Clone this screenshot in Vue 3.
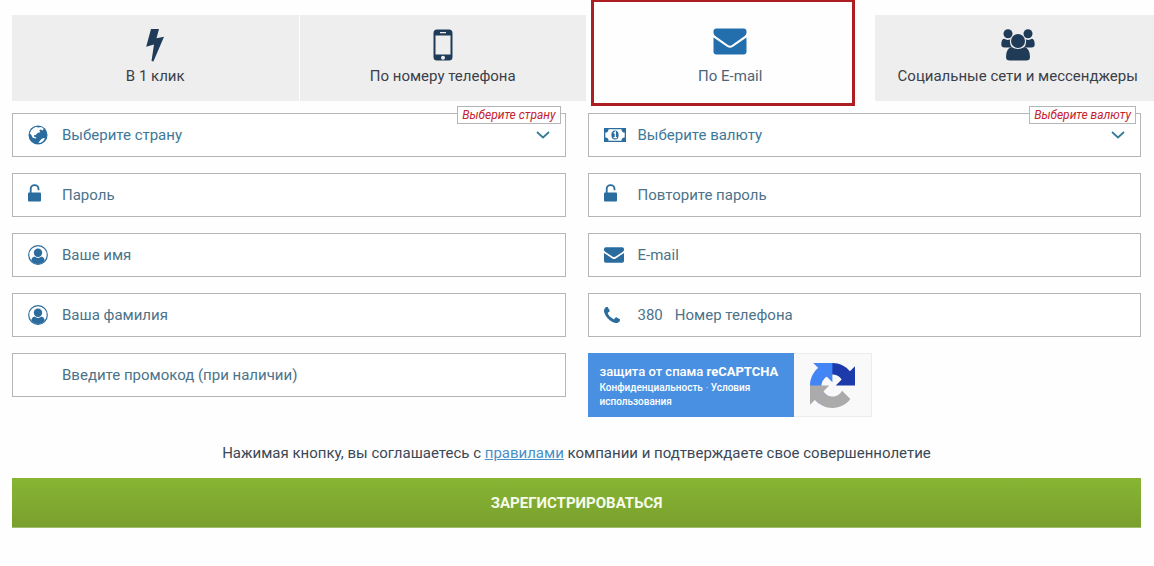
<script setup>
import { ref } from 'vue'

const tabs = [
  { id: 'click', label: 'В 1 клик' },
  { id: 'phone', label: 'По номеру телефона' },
  { id: 'email', label: 'По E-mail' },
  { id: 'social', label: 'Социальные сети и мессенджеры' },
]
const active = ref('email')

const fields = [
  { id: 'country', kind: 'select', icon: 'globe', label: 'Выберите страну' },
  { id: 'currency', kind: 'select', icon: 'money', label: 'Выберите валюту' },
  { id: 'password', type: 'password', icon: 'unlock', label: 'Пароль' },
  { id: 'repeat', type: 'password', icon: 'unlock', label: 'Повторите пароль' },
  { id: 'name', type: 'text', icon: 'user', label: 'Ваше имя' },
  { id: 'mail', type: 'email', icon: 'envelope', label: 'E-mail' },
  { id: 'surname', type: 'text', icon: 'user', label: 'Ваша фамилия' },
  { id: 'tel', type: 'tel', icon: 'handset', label: 'Номер телефона', prefix: '380' },
  { id: 'promo', type: 'text', icon: '', label: 'Введите промокод (при наличии)' },
]
</script>

<template>
  <main class="page">
    <nav class="tabs" aria-label="Способ регистрации">
      <button
        v-for="tab in tabs"
        :key="tab.id"
        type="button"
        class="tab"
        :class="{ active: active === tab.id }"
        @click="active = tab.id"
      >
        <span class="tab-icon">
          <svg v-if="tab.id === 'click'" width="18" height="34" viewBox="0 0 18 34">
            <path d="M5 1h8l-2.500 9.200L18 8.700 7.400 33.500 5.500 33l2.500-16.500-7.800 2.300z" />
          </svg>
          <svg v-else-if="tab.id === 'phone'" width="20" height="32" viewBox="0 0 20 32">
            <path fill-rule="evenodd" d="M4 .5h12A3.500 3.500 0 0 1 19.500 4v24a3.500 3.500 0 0 1-3.500 3.500H4A3.500 3.500 0 0 1 .5 28V4A3.500 3.500 0 0 1 4 .5zM2.500 6.500v19h15v-19zM7 3v1.200h6V3zM10 26.700a2 2 0 1 0 0 4 2 2 0 0 0 0-4z" />
          </svg>
          <svg v-else-if="tab.id === 'email'" width="34" height="27" viewBox="0 0 34 27">
            <path d="M3.500.5h27a3 3 0 0 1 3 3v1.200c0 1.600-1 2.700-2.500 3.900L19 17q-2 1.300-4 0L3 8.600C1.500 7.400.5 6.300.5 4.700V3.500a3 3 0 0 1 3-3z" />
            <path d="M.5 9.500 14 18.700q3 2 6 0L33.500 9.500v14a3 3 0 0 1-3 3h-27a3 3 0 0 1-3-3z" />
          </svg>
          <svg v-else width="34" height="32" viewBox="0 0 34 32">
            <circle cx="7" cy="4.800" r="4.500" />
            <circle cx="27" cy="4.800" r="4.500" />
            <path d="M3 9.800q3.500 2 6.300.400Q8 14.500 11 18.500H3.500Q.3 18.500.3 15.500.3 10.300 3 9.800zM31 9.800q-3.500 2-6.300.400Q26 14.500 23 18.500h7.500q3.200 0 3.200-3 0-5.200-2.700-5.700z" />
            <circle cx="17" cy="12" r="7" />
            <path d="M10.500 18q6.500 4.200 13 0Q29 19.500 29 28q0 3.500-3.800 3.500H8.800Q5 31.500 5 28q0-8.500 5.500-10z" />
          </svg>
        </span>
        <span>{{ tab.label }}</span>
        <span v-if="active === tab.id" class="marker"></span>
      </button>
    </nav>

    <form @submit.prevent>
      <div class="fields">
        <div v-for="f in fields" :key="f.id" class="field">
          <span class="icon">
            <svg v-if="f.icon === 'globe'" width="20" height="20" viewBox="0 0 20 20">
              <circle cx="10" cy="10" r="9.500" />
              <path fill="#fff" d="M3 5.500Q5 2.800 8 1.800l2.500.700 2.700-.5 2.500 1.700-1 1.800-2-1-1.500 1 1.200 1.800-2.500.5-2.500 2.500-1.500-.3.300 1.800 2.300.7-.7 1-3-.8L3 9.500 1.800 8.500zM13.500 14l2-1 1.500.5-2 2.800-2.800 1.800-1.800-.3 1.200-1.500z" />
            </svg>
            <svg v-else-if="f.icon === 'money'" width="22" height="16" viewBox="0 0 22 16">
              <path fill-rule="evenodd" d="M0 1h22v14H0zM4.500 2.300A3 3 0 0 1 1.300 5.500v5a3 3 0 0 1 3.200 3.200h13a3 3 0 0 1 3.200-3.200v-5a3 3 0 0 1-3.200-3.200z" />
              <ellipse cx="11" cy="8" rx="3.600" ry="4.500" />
              <path d="M9.700 6.300 11.300 5v5.500M9.500 10.600h3.400" fill="none" stroke="#fff" stroke-width="1.200" />
            </svg>
            <svg v-else-if="f.icon === 'unlock'" class="lock" width="14" height="18" viewBox="0 0 14 18">
              <rect y="8.500" width="13" height="9" rx="1" />
              <path d="M2.700 9V5a3.900 3.900 0 0 1 7.800 0v1.300" fill="none" stroke="currentColor" stroke-width="1.800" />
            </svg>
            <svg v-else-if="f.icon === 'user'" width="20" height="20" viewBox="0 0 20 20">
              <circle cx="10" cy="10" r="9.300" fill="none" stroke="currentColor" stroke-width="1.200" />
              <circle cx="10" cy="7.800" r="4.200" />
              <path d="M6.500 11.600q3.500 2.600 7 0 2.800.6 3.300 3.600Q14.500 19 10 19t-6.800-3.800q.5-3 3.300-3.600z" />
            </svg>
            <svg v-else-if="f.icon === 'envelope'" width="20" height="16" viewBox="0 0 34 27">
              <path d="M3 .5h28a3 3 0 0 1 3 3v1.200c0 1.600-1 2.700-2.500 3.900L19 16.500q-2 1.300-4 0L2.500 8.600C1 7.400 0 6.300 0 4.700V3.500a3 3 0 0 1 3-3z" />
              <path d="M0 10 14 19.300q3 2 6 0L34 10v13.500a3 3 0 0 1-3 3H3a3 3 0 0 1-3-3z" />
            </svg>
            <svg v-else-if="f.icon === 'handset'" width="16" height="16" viewBox="192 128 1408 1408">
              <path d="M1600 1240q0 27-10 70.500t-21 68.500q-21 50-122 106-94 51-186 51-27 0-53-3.500t-57.500-12.500-47-14.500-55.500-20.500-49-18q-98-35-175-83-127-79-264-216t-216-264q-48-77-83-175-3-9-18-49t-20.500-55.500-14.500-47-12.500-57.500-3.500-53q0-92 51-186 56-101 106-122 25-11 68.500-21t70.500-10q14 0 21 3 18 6 53 76 11 19 30 54t35 63.500 31 53.500q3 4 17.500 25t21.500 35.500 7 28.500q0 20-28.500 50t-62 55-62 53-28.500 46q0 9 5 22.500t8.500 20.500 14 24 11.500 19q76 137 174 235t235 174q2 1 19 11.500t24 14 20.500 8.500 22.500 5q18 0 46-28.500t53-62 55-62 50-28.500q14 0 28.500 7t35.500 21.500 25 17.500q25 15 53.500 31t63.500 35 54 30q70 35 76 53 3 7 3 21z" />
            </svg>
          </span>

          <template v-if="f.kind === 'select'">
            <select :id="f.id" class="control choice">
              <option>{{ f.label }}</option>
            </select>
            <svg class="chevron" width="14" height="8" viewBox="0 0 14 8">
              <path d="m1 1 6 5.500L13 1" fill="none" stroke="currentColor" stroke-width="1.700" />
            </svg>
            <label class="hint" :for="f.id">{{ f.label }}</label>
          </template>
          <template v-else>
            <label v-if="f.prefix" class="prefix" :for="f.id">{{ f.prefix }}</label>
            <input :id="f.id" class="control" :type="f.type" :placeholder="f.label" :aria-label="f.label" />
          </template>
        </div>

        <aside class="captcha">
          <div class="captcha-text">
            <p class="captcha-title">защита от спама <b>reCAPTCHA</b></p>
            <p class="captcha-links"><a href="#">Конфиденциальность</a> <i>·</i> <a href="#">Условия<br />использования</a></p>
          </div>
          <div class="captcha-logo">
            <svg width="45" height="45" viewBox="0 0 64 64">
              <path fill="#1c3aa9" d="M64 31.955l-.033-1.370V4.687l-7.160 7.160C50.948 4.674 42.033.093 32.050.093c-10.400 0-19.622 4.960-25.458 12.640l11.736 11.860a15.550 15.550 0 0 1 4.754-5.334c2.050-1.600 4.952-2.906 8.968-2.906.485 0 .86.057 1.135.163 4.976.393 9.288 3.140 11.828 7.124l-8.307 8.307L64 31.953" />
              <path fill="#4285f4" d="M31.862.094l-1.370.033H4.594l7.160 7.160C4.580 13.147 0 22.060 0 32.046c0 10.400 4.960 19.622 12.640 25.458L24.500 45.768a15.550 15.550 0 0 1-5.334-4.754c-1.600-2.050-2.906-4.952-2.906-8.968 0-.485.057-.86.163-1.135.393-4.976 3.140-9.288 7.124-11.828l8.307 8.307L31.860.095" />
              <path fill="#ababab" d="M.001 32.045l.033 1.370v25.898l7.160-7.160c5.860 7.173 14.774 11.754 24.760 11.754 10.400 0 19.622-4.960 25.458-12.640l-11.736-11.860a15.550 15.550 0 0 1-4.754 5.334c-2.050 1.600-4.952 2.906-8.968 2.906-.485 0-.86-.057-1.135-.163-4.976-.393-9.288-3.140-11.828-7.124l8.307-8.307c-10.522.04-22.400.066-27.295-.005" />
            </svg>
          </div>
        </aside>
      </div>

      <p class="terms">
        Нажимая кнопку, вы соглашаетесь с <a href="#">правилами</a> компании и подтверждаете свое совершеннолетие
      </p>
      <button type="submit" class="submit">ЗАРЕГИСТРИРОВАТЬСЯ</button>
    </form>
  </main>
</template>

<style>
body {
  background: #fefefe;
}
</style>

<style scoped>
.page {
  padding: 15px 13px 38px 12px;
  overflow: hidden;
  font-family: Roboto, "Liberation Sans", sans-serif;
  font-size: 15px;
  line-height: 20px;
  color: #3b4856;
}
svg {
  display: block;
  fill: currentColor;
}
button,
select,
input {
  font: inherit;
  border: 0;
  margin: 0;
}
.tabs {
  display: grid;
  grid-template-columns: repeat(4, minmax(0, 1fr));
  gap: 1px;
  margin-right: -20px;
}
.tab {
  position: relative;
  display: flex;
  flex-direction: column;
  align-items: center;
  gap: 4px;
  padding: 13px 0 15px;
  background: #eee;
  color: #3b4048;
  white-space: nowrap;
}
.tab-icon {
  display: flex;
  align-items: center;
  height: 34px;
  color: #203b58;
}
.tab.active {
  background: none;
  color: #4c6478;
}
.active .tab-icon {
  align-items: flex-start;
  color: #236ead;
}
.marker {
  position: absolute;
  inset: -16px 19px -5px 4px;
  border: 3px solid #ae1d22;
}
.fields {
  display: grid;
  grid-template-columns: repeat(2, minmax(0, 1fr));
  grid-auto-rows: 44px;
  gap: 16px 22px;
  margin-top: 12px;
}
.field {
  position: relative;
  display: flex;
  align-items: center;
  box-sizing: border-box;
  padding: 0 15px;
  border: 1px solid #b4b6b7;
  background: #fff;
}
.icon {
  width: 34px;
  flex: none;
  color: #2b6c9f;
}
.lock {
  margin-bottom: 4px;
}
.control {
  flex: 1;
  min-width: 0;
  height: 40px;
  padding: 0;
  appearance: none;
  background: none;
  color: #4c7389;
  outline: 0;
}
.control::placeholder {
  color: #4c7389;
  opacity: 1;
}
.choice {
  color: #3d7899;
}
.prefix {
  margin-right: 12px;
  color: #4c7389;
}
.chevron {
  color: #347b98;
  pointer-events: none;
}
.hint {
  position: absolute;
  top: -8px;
  right: 4px;
  padding: 0 4px;
  border: 1px solid #b4b6b7;
  background: #fff;
  font-size: 12px;
  line-height: 16px;
  font-style: italic;
  color: #c4232e;
}
.captcha {
  display: flex;
  height: 64px;
  width: 284px;
}
.captcha-text {
  width: 206px;
  box-sizing: border-box;
  padding: 10px 0 0 12px;
  background: #4a90e2;
  color: #fff;
  font-weight: 500;
}
.captcha-text p {
  margin: 0;
}
.captcha-title {
  font-size: 13px;
  line-height: 18px;
}
.captcha-links {
  font-size: 10px;
  line-height: 14px;
}
.captcha-links a {
  color: inherit;
  text-decoration: none;
}
.captcha-links i {
  font-style: normal;
  opacity: 0.5;
}
.captcha-logo {
  flex: 1;
  display: flex;
  align-items: center;
  justify-content: center;
  border: 1px solid #ececec;
  border-left: 0;
  background: #f9f9f9;
}
.terms {
  margin: 46px 0 15px;
  text-align: center;
}
.terms a {
  color: #4a90c8;
}
.submit {
  display: block;
  width: 100%;
  height: 50px;
  border-bottom: 1px solid #a3bd72;
  background: linear-gradient(#87b533, #79a02d);
  color: #f7fbe9;
  font-weight: 700;
}
</style>
